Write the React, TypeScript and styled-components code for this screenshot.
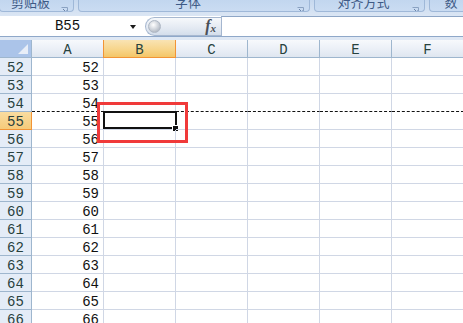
import styled, { createGlobalStyle } from 'styled-components';

const GlobalStyle = createGlobalStyle`
  html, body {
    margin: 0;
    padding: 0;
    background: #ffffff;
    overflow: hidden;
  }
  body {
    font-family: 'Liberation Mono', monospace;
  }
`;

const COLUMNS = ['A', 'B', 'C', 'D', 'E', 'F'];
const ROWS = Array.from({ length: 15 }, (_, i) => 52 + i);
const ACTIVE_ROW = 55;
const ACTIVE_COL = 'B';
const PAGE_BREAK_AFTER = 54;

const RIBBON_GROUPS = [
  { label: '剪贴板', width: 75, launcher: true },
  { label: '字体', width: 232, launcher: true },
  { label: '对齐方式', width: 111, launcher: true },
  { label: '数', width: 44, launcher: false },
];

function Launcher() {
  return (
    <svg width="7" height="7" viewBox="0 0 7 7">
      <path d="M0.5 0.5 H6.5 V6.5" fill="none" stroke="#8aa2c2" strokeWidth="1" />
      <path d="M2 2 L5.5 5.5 M3.5 5.5 H5.5 V3.5" fill="none" stroke="#6a83a8" strokeWidth="1" />
    </svg>
  );
}

export default function App() {
  return (
    <Page>
      <GlobalStyle />
      <Ribbon>
        {RIBBON_GROUPS.map((g) => (
          <RibbonGroup key={g.label} $width={g.width}>
            <GroupLabel>{g.label}</GroupLabel>
            {g.launcher && (
              <LauncherSlot>
                <Launcher />
              </LauncherSlot>
            )}
          </RibbonGroup>
        ))}
      </Ribbon>
      <FormulaBar>
        <NameBox>
          <NameText>B55</NameText>
          <DropArrow />
        </NameBox>
        <FxPill>
          <Knob />
          <FxLabel>
            f<sub>x</sub>
          </FxLabel>
        </FxPill>
        <FormulaInput />
      </FormulaBar>
      <Spacer />
      <SheetWrap>
        <Sheet>
          <Corner>
            <CornerTriangle />
          </Corner>
          {COLUMNS.map((c) => (
            <ColHeader key={c} $active={c === ACTIVE_COL}>
              {c}
            </ColHeader>
          ))}
          {ROWS.map((r) => (
            <Row key={r} r={r} />
          ))}
        </Sheet>
        <Highlight />
      </SheetWrap>
    </Page>
  );
}

function Row({ r }: { r: number }) {
  const pageBreak = r === PAGE_BREAK_AFTER;
  return (
    <>
      <RowHeader $active={r === ACTIVE_ROW}>{r}</RowHeader>
      {COLUMNS.map((c) => (
        <Cell
          key={c}
          $numeric={c === 'A'}
          $break={pageBreak}
          $selected={r === ACTIVE_ROW && c === ACTIVE_COL}
        >
          {c === 'A' ? r : ''}
        </Cell>
      ))}
    </>
  );
}

const Page = styled.div`
  width: 463px;
  height: 323px;
  overflow: hidden;
  background: #ffffff;
`;

const Ribbon = styled.div`
  display: flex;
  gap: 4px;
  height: 16px;
  margin-left: -1px;
  background: linear-gradient(#c6d8ef, #dbe6f4);
`;

const RibbonGroup = styled.div<{ $width: number }>`
  flex: 0 0 ${({ $width }) => $width}px;
  height: 12px;
  display: flex;
  align-items: flex-end;
  overflow: hidden;
  box-sizing: border-box;
  border: 1px solid #9fb8d8;
  border-top: none;
  border-radius: 0 0 4px 4px;
  background: linear-gradient(#c2d6ef, #cadcf2);
`;

const GroupLabel = styled.div`
  flex: 1;
  text-align: center;
  font-family: 'Noto Sans CJK SC', sans-serif;
  font-size: 13px;
  line-height: 19px;
  color: #3e5a86;
  white-space: nowrap;
`;

const LauncherSlot = styled.div`
  align-self: flex-start;
  width: 12px;
  padding-top: 1px;
`;

const FormulaBar = styled.div`
  display: flex;
  height: 20px;
  background: #ffffff;
  border-bottom: 1px solid #8fa8c9;
`;

const NameBox = styled.div`
  flex: 0 0 140px;
  display: flex;
  align-items: center;
  background: #ffffff;
`;

const NameText = styled.div`
  flex: 1;
  padding-left: 5px;
  text-align: center;
  font-family: 'Liberation Mono', monospace;
  font-size: 14px;
  color: #111111;
`;

const DropArrow = styled.div`
  width: 0;
  height: 0;
  margin: 1px 4px 0 0;
  border-left: 3.5px solid transparent;
  border-right: 3.5px solid transparent;
  border-top: 4px solid #1a1a1a;
`;

const FxPill = styled.div`
  margin-left: 5px;
  flex: 0 0 76px;
  display: flex;
  align-items: center;
  justify-content: space-between;
  box-sizing: border-box;
  margin-top: 1px;
  height: 19px;
  border: 1px solid #a7b8d0;
  border-right: none;
  border-radius: 10px 0 0 10px;
  background: linear-gradient(#f6f8fb, #e3e9f2 60%, #d4deeb);
`;

const Knob = styled.div`
  width: 11px;
  height: 11px;
  margin-left: 2px;
  border-radius: 50%;
  background: radial-gradient(circle at 40% 35%, #ffffff, #c9ced6 55%, #9aa3b0);
  border: 1px solid #aeb7c4;
`;

const FxLabel = styled.div`
  margin-right: 5px;
  font-family: 'Liberation Serif', serif;
  font-style: italic;
  font-weight: bold;
  font-size: 16px;
  line-height: 16px;
  color: #4a4f58;
  sub {
    font-size: 11px;
    vertical-align: -1px;
  }
`;

const FormulaInput = styled.div`
  flex: 1;
  border-top: 1px solid #8ea6c6;
  border-left: 1px solid #a4b6cf;
  background: #ffffff;
`;

const Spacer = styled.div`
  height: 3px;
  background: #dfe8f4;
`;

const SheetWrap = styled.div`
  position: relative;
`;

const Sheet = styled.div`
  display: grid;
  grid-template-columns: 32px repeat(6, 72px);
  grid-auto-rows: 18px;
`;

const Corner = styled.div`
  position: relative;
  box-sizing: border-box;
  background: #abc4e9;
  border-right: 1px solid #9eb6ce;
  border-bottom: 1px solid #9eb6ce;
`;

const CornerTriangle = styled.div`
  position: absolute;
  right: 3px;
  bottom: 3px;
  width: 0;
  height: 0;
  border-left: 10px solid transparent;
  border-bottom: 10px solid #e8eef8;
`;

const HeaderBase = styled.div`
  box-sizing: border-box;
  display: flex;
  align-items: center;
  justify-content: center;
  font-family: 'Liberation Mono', monospace;
  font-size: 14px;
  color: #27413e;
  border-right: 1px solid #9eb6ce;
  border-bottom: 1px solid #9eb6ce;
`;

const ColHeader = styled(HeaderBase)<{ $active: boolean }>`
  padding-top: 2px;
  background: ${({ $active }) =>
    $active
      ? 'linear-gradient(#f9e3b3, #f7d488 60%, #f4c667)'
      : 'linear-gradient(#f7f9fc, #e9eef6 60%, #dfe6f0)'};
  ${({ $active }) =>
    $active ? 'border: 1px solid #f29436; border-top: none; margin-left: -1px;' : ''}
`;

const RowHeader = styled(HeaderBase)<{ $active: boolean }>`
  padding-top: 3px;
  background: ${({ $active }) =>
    $active ? 'linear-gradient(#f9dca0, #f6cb7a)' : '#e4ecf7'};
  ${({ $active }) =>
    $active ? 'border-right-color: #f29436; border-bottom-color: #f29436;' : ''}
`;

const Cell = styled.div<{ $numeric: boolean; $break: boolean; $selected: boolean }>`
  position: relative;
  box-sizing: border-box;
  display: flex;
  align-items: center;
  justify-content: flex-end;
  padding: 3px 4px 0 0;
  font-family: 'Liberation Mono', monospace;
  font-size: 14px;
  color: #111111;
  border-right: 1px solid #d0d7e5;
  border-bottom: ${({ $break }) => ($break ? '1px dashed #111111' : '1px solid #d0d7e5')};

  ${({ $selected }) =>
    $selected &&
    `
    &::before {
      content: '';
      position: absolute;
      left: -1px;
      top: -1px;
      right: -2px;
      bottom: 0;
      border: 2px solid #111111;
    }
    &::after {
      content: '';
      position: absolute;
      right: -4px;
      bottom: -3px;
      width: 5px;
      height: 5px;
      background: #111111;
      border: 1px solid #ffffff;
    }
  `}
`;

const Highlight = styled.div`
  position: absolute;
  left: 97px;
  top: 62px;
  width: 91px;
  height: 41px;
  box-sizing: border-box;
  border: 3px solid #f03a3a;
  pointer-events: none;
`;
